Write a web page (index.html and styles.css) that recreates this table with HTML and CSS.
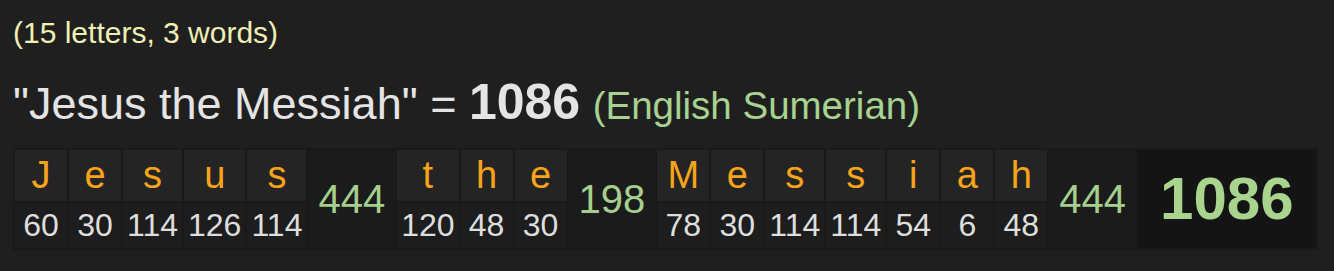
FILE: index.html
```html
<!DOCTYPE html>
<html lang="en">
<head>
<meta charset="utf-8">
<title>Jesus the Messiah</title>
<link rel="stylesheet" href="styles.css">
</head>
<body>
<div class="count">(15 letters, 3 words)</div>
<div class="title">"Jesus the Messiah" = <b class="total">1086</b> <span class="cipher">(English Sumerian)</span></div>
<table class="breakdown">
<tr class="letters">
<td>J</td><td>e</td><td>s</td><td>u</td><td>s</td>
<td class="sum" rowspan="2">444</td>
<td>t</td><td>h</td><td>e</td>
<td class="sum" rowspan="2">198</td>
<td>M</td><td>e</td><td>s</td><td>s</td><td>i</td><td>a</td><td>h</td>
<td class="sum" rowspan="2">444</td>
<td class="grand" rowspan="2">1086</td>
</tr>
<tr class="values">
<td>60</td><td>30</td><td>114</td><td>126</td><td>114</td>
<td>120</td><td>48</td><td>30</td>
<td>78</td><td>30</td><td>114</td><td>114</td><td>54</td><td>6</td><td>48</td>
</tr>
</table>
</body>
</html>
```
FILE: styles.css
```css
html, body {
  margin: 0;
  background: #1f1f1f;
}
body {
  padding: 15px 13px 0;
  font-family: "Liberation Sans", Arial, sans-serif;
}
.count {
  font-size: 30px;
  line-height: 35px;
  color: #efeeb4;
}
.title {
  margin-top: 27px;
  font-size: 45px;
  line-height: 50px;
  color: #e4e4e4;
  white-space: nowrap;
}
.title .total {
  font-size: 50px;
  font-weight: bold;
}
.title .cipher {
  font-size: 38.5px;
  color: #a7d28f;
}
.breakdown {
  margin-top: 17px;
  border-collapse: separate;
  border-spacing: 2px;
  background: #191919;
}
.breakdown td {
  padding: 0 4px;
  text-align: center;
  white-space: nowrap;
}
.letters td {
  height: 51px;
  width: 44px;
  font-size: 38px;
  line-height: 51px;
  color: #f7a41b;
  background: #242424;
}
.values td {
  height: 45px;
  font-size: 32px;
  line-height: 45px;
  color: #dedede;
  background: #1d1d1d;
}
.breakdown td.sum {
  padding: 0 10px;
  font-size: 40px;
  line-height: 40px;
  color: #a5cf8d;
  background: #1b1b1b;
}
.breakdown td.grand {
  padding: 0 22px;
  font-size: 60px;
  font-weight: bold;
  line-height: 60px;
  color: #a8d48e;
  background: #141414;
}
```
